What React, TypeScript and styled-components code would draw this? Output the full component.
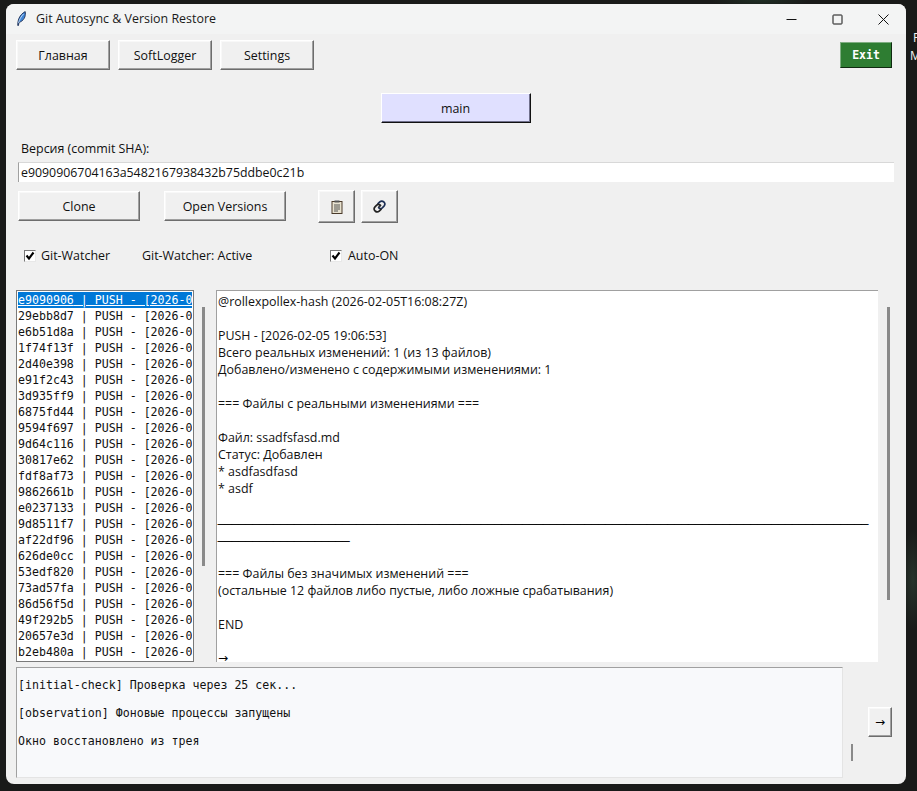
import React from "react";
import styled, { createGlobalStyle, css } from "styled-components";

const Global = createGlobalStyle`
  html, body { margin: 0; padding: 0; background: #191a19; }
  #root { width: 917px; height: 791px; overflow: hidden; }
`;

const UI = `"Open Sans", "Noto Sans", sans-serif`;
const MONO = `"DejaVu Sans Mono", "Liberation Mono", monospace`;
const BASE = "12.45px";

const Desktop = styled.div`
  width: 917px; height: 791px; display: flex; box-sizing: border-box;
  padding: 4px 0 7px 6px; overflow: hidden;
  background:
    radial-gradient(ellipse 50px 8px at 760px 0px, #1f2e24 0%, transparent 100%),
    radial-gradient(ellipse 12px 50px at 913px 580px, #27332b 0%, transparent 100%),
    #191a19;
`;
const Win = styled.div`
  width: 900px; height: 780px; flex: none; background: #f0f0f0; border-radius: 8px;
  display: flex; flex-direction: column; overflow: hidden; font-family: ${UI}; font-size: ${BASE}; color: #111;
`;
const Side = styled.div`
  margin-left: 4px; padding-top: 25px; font-family: ${UI}; font-size: 12px; line-height: 18px; color: #f2f2f2;
  white-space: pre; width: 7px; overflow: hidden;
`;
const SideLine = styled.div<{ $x: number }>`
  margin-left: ${p => p.$x}px;
`;
const TitleBar = styled.div`
  box-sizing: border-box; height: 30px; flex: none; background: #f3f4f4; display: flex; align-items: center; padding: 0 0 1px 11px;
`;
const Title = styled.span`
  margin-left: 10px; color: #1a1a1a;
`;
const WinControls = styled.div`
  margin-left: auto; display: flex; height: 100%;
`;
const WinControl = styled.div`
  width: 46px; height: 30px; display: flex; align-items: center; justify-content: center;
`;
const Bevel = css`
  box-sizing: border-box; background: #f0f0f0; border: 1px solid; padding: 0;
  border-color: #fff #6d6d6d #6d6d6d #fff; box-shadow: inset -1px -1px 0 #a0a0a0, inset 1px 1px 0 #f8f8f8;
  display: flex; align-items: center; justify-content: center; font-family: ${UI}; font-size: ${BASE}; color: #111;
`;
const Body = styled.div`
  flex: 1; min-height: 0; display: flex; flex-direction: column; padding: 6px 14px 6px 10px;
`;
const TopRow = styled.div`
  display: flex; gap: 8px; height: 30px; align-items: flex-start;
`;
const TabButton = styled.button`
  ${Bevel}; width: 94px; height: 30px;
`;
const ExitButton = styled.button`
  box-sizing: border-box; margin-left: auto; margin-top: 2px; width: 52px; height: 26px; background: #2e7d32;
  border: 1px solid; border-color: #7fae82 #0f2a10 #0f2a10 #7fae82; color: #fff; font-family: ${MONO}; font-weight: 700; font-size: 11.5px;
  padding: 0; display: flex; align-items: center; justify-content: center;
`;
const BranchRow = styled.div`
  display: flex; justify-content: center; margin-top: 23px; height: 30px;
`;
const BranchButton = styled.button`
  ${Bevel}; width: 150px; height: 30px; background: #e0e0ff; margin-left: 3px;
  border-color: #fff #111 #111 #fff; box-shadow: inset -1px -1px 0 #70708c;
`;
const VersionLabel = styled.div`
  margin: 17px 0 0 5px; height: 17px; line-height: 17px; color: #111;
`;
const ShaInput = styled.div`
  box-sizing: border-box; margin: 5px 0 0 2px; width: 876px; height: 20px; background: #fff;
  padding-left: 2px; border-left: 1px solid #a0a0a0; border-top: 1px solid #d8d8d8; line-height: 19px; font-size: 12.35px; color: #111;
`;
const ActionRow = styled.div`
  display: flex; margin: 8px 0 0 2px; height: 33px; align-items: flex-start;
`;
const ActionButton = styled.button`
  ${Bevel}; width: 122px; height: 30px; margin: 1px 24px 0 0;
`;
const IconButton = styled.button<{ $gap?: number }>`
  ${Bevel}; width: 37px; height: 33px; margin-left: ${p => p.$gap ?? 0}px;
`;
const CheckRow = styled.div`
  display: flex; align-items: center; height: 17px; margin-top: 24px; padding-left: 8px;
`;
const CheckBox = styled.span`
  box-sizing: border-box; width: 12px; height: 12px; flex: none; background: #fff; border: 1px solid; border-color: #777 #e8e8e8 #e8e8e8 #777;
  display: flex; align-items: center; justify-content: center;
`;
const CheckLabel = styled.span<{ $w: number; $ml?: number }>`
  margin-left: ${p => p.$ml ?? 5}px; width: ${p => p.$w}px; flex: none; white-space: nowrap;
`;
const Panels = styled.div`
  display: flex; margin-top: 26px; height: 372px; align-items: stretch;
`;
const ListBox = styled.div`
  box-sizing: border-box; width: 178px; flex: none; background: #fff; border: 1px solid #7a7a7a; padding: 1px 1px 0 1px; overflow: hidden;
  font-family: ${MONO}; font-size: 11.6px; color: #111;
`;
const ListRow = styled.div<{ $sel?: boolean }>`
  height: 16px; line-height: 16px; white-space: pre; overflow: hidden;
  ${p => p.$sel && css`
    background: #0078d7; color: #fff; text-decoration: underline;
  `}
`;
const ScrollThumb = styled.div<{ $h: number; $w?: number; $mt: number; $ml: number }>`
  flex: none; width: ${p => p.$w ?? 3}px; height: ${p => p.$h}px; margin-top: ${p => p.$mt}px; margin-left: ${p => p.$ml}px; background: #8a8a8a;
`;
const Detail = styled.div`
  box-sizing: border-box; width: 662px; margin-left: 11px; flex: none; background: #fff;
  border-left: 1px solid #a0a0a0; border-top: 1px solid #a0a0a0; padding: 2px 0 0 1px; overflow: hidden; line-height: 17px; color: #111;
`;
const DetailLine = styled.div`
  height: 17px; white-space: pre;
`;
const RuleLine = styled.div`
  height: 17px; line-height: 9px; white-space: pre; font-family: "Liberation Sans", sans-serif; font-size: 12.44px; color: #000;
  -webkit-text-stroke: 0.35px #000;
`;
const ArrowGlyph = styled.div`
  height: 17px; white-space: pre; font-family: "DejaVu Sans", sans-serif; font-size: 12px; color: #000;
`;
const BottomRow = styled.div`
  display: flex; margin-top: 5px; height: 111px;
`;
const LogBox = styled.div`
  box-sizing: border-box; width: 827px; flex: none; background: #f8f9fb; border: 1px solid; border-color: #a0a0a0 #e4e4e4 #e4e4e4 #a0a0a0;
  padding: 10px 0 0 1px; font-family: ${MONO}; font-size: 11.6px; line-height: 14px; color: #111; overflow: hidden;
`;
const LogLine = styled.div`
  height: 28px; white-space: pre;
`;
const ArrowButton = styled.button`
  ${Bevel}; width: 24px; height: 30px; margin: 40px 0 0 15px; font-family: "DejaVu Sans", sans-serif; font-size: 12px; color: #000;
`;

const hashes = ["e9090906","29ebb8d7","e6b51d8a","1f74f13f","2d40e398","e91f2c43","3d935ff9","6875fd44","9594f697","9d64c116","30817e62","fdf8af73","9862661b","e0237133","9d8511f7","af22df96","626de0cc","53edf820","73ad57fa","86d56f5d","49f292b5","20657e3d","b2eb480a"];

const detailTop = [
  "@rollexpollex-hash (2026-02-05T16:08:27Z)", "",
  "PUSH - [2026-02-05 19:06:53]",
  "Всего реальных изменений: 1 (из 13 файлов)",
  "Добавлено/изменено с содержимыми изменениями: 1", "",
  "=== Файлы с реальными изменениями ===", "",
  "Файл: ssadfsfasd.md",
  "Статус: Добавлен",
  "* asdfasdfasd",
  "* asdf", "",
];
const detailBottom = [
  "",
  "=== Файлы без значимых изменений ===",
  "(остальные 12 файлов либо пустые, либо ложные срабатывания)", "",
  "END", "",
];

const Feather = () => (
  <svg width="9" height="15" viewBox="0 0 9 15">
    <path d="M0.8 14.5 C0.6 10 2 4 8.2 0.6 C8.8 4 8 8.5 3.5 10.8 L2 11.5 L1.4 14.5 Z" fill="#3f86d8" stroke="#1a2a50" strokeWidth="0.9" />
    <path d="M1.6 12 C2.4 8.5 4 5.5 6.6 3" fill="none" stroke="#d5e6f8" strokeWidth="0.8" />
  </svg>
);
const Check = () => (
  <svg width="10" height="10" viewBox="0 0 10 10">
    <path d="M1.5 4.5 L4 7.5 L8.5 1.5" fill="none" stroke="#000" strokeWidth="2.1" />
  </svg>
);
const Clipboard = () => (
  <svg width="12" height="14" viewBox="0 0 12 14">
    <rect x="1" y="1.5" width="10" height="12" fill="#e8e2d0" stroke="#4a3a2a" strokeWidth="1" />
    <rect x="3.5" y="0.5" width="5" height="2" fill="#555" />
    <path d="M3 5h6M3 7h6M3 9h6M3 11h4" stroke="#444" strokeWidth="0.9" />
  </svg>
);
const LinkIcon = () => (
  <svg width="13" height="13" viewBox="0 0 13 13">
    <g fill="none" strokeWidth="1.7" strokeLinecap="round">
      <path d="M5.6 7.4 L7.6 5.4" stroke="#333" />
      <path d="M5 3.6 L6.8 1.9 C7.9 .9 9.4 .7 10.9 2 C12.2 3.4 12 5 11 6.1 L9.3 7.8 C8.2 8.8 6.8 8.7 5.9 7.8" stroke="#1c2f55" />
      <path d="M8 9.4 L6.2 11.1 C5.1 12.1 3.6 12.3 2.1 11 C.8 9.6 1 8 2 6.9 L3.7 5.2 C4.8 4.2 6.2 4.3 7.1 5.2" stroke="#222" />
    </g>
  </svg>
);

export default function App() {
  return (
    <>
      <Global />
      <Desktop>
        <Win>
          <TitleBar>
            <Feather />
            <Title>Git Autosync &amp; Version Restore</Title>
            <WinControls>
              <WinControl>
                <svg width="11" height="11" viewBox="0 0 11 11"><path d="M0.5 5.5h10" stroke="#111" strokeWidth="1" /></svg>
              </WinControl>
              <WinControl>
                <svg width="11" height="11" viewBox="0 0 11 11"><rect x="1" y="1" width="9" height="9" rx="0.6" fill="none" stroke="#111" strokeWidth="1" /></svg>
              </WinControl>
              <WinControl>
                <svg width="11" height="11" viewBox="0 0 11 11"><path d="M0.5 0.5l10 10M10.5 0.5l-10 10" stroke="#111" strokeWidth="1" /></svg>
              </WinControl>
            </WinControls>
          </TitleBar>
          <Body>
            <TopRow>
              <TabButton>Главная</TabButton>
              <TabButton>SoftLogger</TabButton>
              <TabButton>Settings</TabButton>
              <ExitButton>Exit</ExitButton>
            </TopRow>
            <BranchRow><BranchButton>main</BranchButton></BranchRow>
            <VersionLabel>Версия (commit SHA):</VersionLabel>
            <ShaInput>e9090906704163a5482167938432b75ddbe0c21b</ShaInput>
            <ActionRow>
              <ActionButton>Clone</ActionButton>
              <ActionButton>Open Versions</ActionButton>
              <IconButton $gap={8}><Clipboard /></IconButton>
              <IconButton $gap={6}><LinkIcon /></IconButton>
            </ActionRow>
            <CheckRow>
              <CheckBox><Check /></CheckBox>
              <CheckLabel $w={95}>Git-Watcher</CheckLabel>
              <CheckLabel $w={188} $ml={6}>Git-Watcher: Active</CheckLabel>
              <CheckBox><Check /></CheckBox>
              <CheckLabel $w={70} $ml={6}>Auto-ON</CheckLabel>
            </CheckRow>
            <Panels>
              <ListBox>
                {hashes.map((h, i) => (
                  <ListRow key={h} $sel={i === 0}>{h} | PUSH - [2026-02-05</ListRow>
                ))}
              </ListBox>
              <ScrollThumb $h={259} $mt={17} $ml={8} />
              <Detail>
                {detailTop.map((l, i) => <DetailLine key={i}>{l}</DetailLine>)}
                <RuleLine>{"_".repeat(94)}</RuleLine>
                <RuleLine>{"_".repeat(19)}</RuleLine>
                {detailBottom.map((l, i) => <DetailLine key={i}>{l}</DetailLine>)}
                <ArrowGlyph>→</ArrowGlyph>
              </Detail>
              <ScrollThumb $h={293} $mt={17} $ml={9} />
            </Panels>
            <BottomRow>
              <LogBox>
                <LogLine>[initial-check] Проверка через 25 сек...</LogLine>
                <LogLine>[observation] Фоновые процессы запущены</LogLine>
                <LogLine>Окно восстановлено из трея</LogLine>
              </LogBox>
              <ScrollThumb $h={17} $w={2} $mt={77} $ml={8} />
              <ArrowButton>→</ArrowButton>
            </BottomRow>
          </Body>
        </Win>
        <Side>
          <SideLine $x={3}>P</SideLine>
          <SideLine $x={0}>M</SideLine>
        </Side>
      </Desktop>
    </>
  );
}
